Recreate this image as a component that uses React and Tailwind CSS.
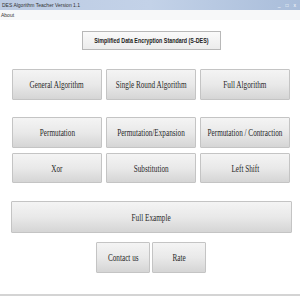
import React from 'react';

const btnBase =
  'flex items-center justify-center border border-[#c4c4c4] bg-linear-to-b from-[#f4f4f4] via-[#e9e9e9] to-[#d5d5d5] text-[#2a2a2a] text-[10px] rounded-[1px] overflow-hidden whitespace-nowrap';

const Btn = ({ label, className = '' }) => (
  <div className={`${btnBase} ${className}`} style={{ fontFamily: '"Liberation Serif", serif' }}>
    <span className="inline-block scale-x-[0.72]">{label}</span>
  </div>
);

const App = () => {
  return (
    <div className="w-[300px] h-[300px] bg-white flex flex-col overflow-hidden" style={{ fontFamily: '"Liberation Sans", sans-serif' }}>
      {/* title bar */}
      <div className="h-[10px] bg-linear-to-r from-[#bccbe3] via-[#c3d2e8] to-[#a9bdda] flex items-center justify-between pl-[2px] pr-[4px]">
        <span className="text-[5px] text-[#333] leading-none">DES Algorithm Teacher   Version 1.1</span>
        <div className="flex gap-[5px] text-[5px] text-white leading-none">
          <span>_</span>
          <span>□</span>
          <span>x</span>
        </div>
      </div>
      {/* menu */}
      <div className="h-[10px] bg-[#f7f8f9] flex items-center px-[1px]">
        <span className="text-[5px] text-[#333] leading-none">About</span>
      </div>

      <div className="flex justify-center mt-[11px] pl-[3px]">
        <div className="w-[139px] h-[19px] border border-[#b8b8b8] bg-linear-to-b from-[#fafafa] to-[#ececec] flex items-center justify-center whitespace-nowrap">
          <span className="inline-block scale-x-[0.67] text-[8px] font-bold text-[#222]">Simplified Data Encryption Standard (S-DES)</span>
        </div>
      </div>

      <div className="grid grid-cols-3 gap-x-[4px] pl-[12px] pr-[10px] mt-[19px]">
        <Btn label="General Algorithm" className="h-[31px] border-[#8fc3dc]" />
        <Btn label="Single Round Algorithm" className="h-[31px]" />
        <Btn label="Full Algorithm" className="h-[31px]" />
      </div>

      <div className="grid grid-cols-3 gap-x-[4px] gap-y-[5px] pl-[12px] pr-[10px] mt-[17px]">
        <Btn label="Permutation" className="h-[31px]" />
        <Btn label="Permutation/Expansion" className="h-[31px]" />
        <Btn label="Permutation / Contraction" className="h-[31px]" />
        <Btn label="Xor" className="h-[30px]" />
        <Btn label="Substitution" className="h-[30px]" />
        <Btn label="Left Shift" className="h-[30px]" />
      </div>

      <div className="pl-[11px] pr-[8px] mt-[18px]">
        <Btn label="Full Example" className="h-[32px]" />
      </div>

      <div className="flex justify-center gap-[2px] mt-[9px] pl-[2px]">
        <Btn label="Contact us" className="h-[31px] w-[54px]" />
        <Btn label="Rate" className="h-[31px] w-[54px]" />
      </div>

      <div className="mt-[21px] h-[2px] bg-[#d4d4d4]" />
    </div>
  );
};

export default App;
